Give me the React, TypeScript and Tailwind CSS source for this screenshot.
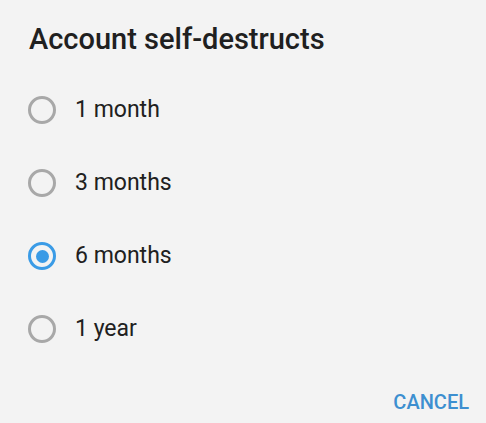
import React from "react";

const options = ["1 month", "3 months", "6 months", "1 year"];

function Radio({ checked }: { checked: boolean }) {
  return (
    <div
      className={
        "flex h-[28px] w-[28px] items-center justify-center rounded-full border-[3px] " +
        (checked ? "border-[#3a9be6]" : "border-[#a8a8a8]")
      }
    >
      {checked && <div className="h-[13px] w-[13px] rounded-full bg-[#3a9be6]" />}
    </div>
  );
}

export default function App() {
  const selected = "6 months";
  return (
    <div
      className="flex h-[423px] w-[486px] flex-col bg-[#f3f3f3] text-[#202020]"
      style={{ fontFamily: "Roboto, 'Noto Sans', sans-serif" }}
    >
      {/* Title */}
      <div className="pl-[29px] pt-[22px] text-[29px] font-medium leading-[34px]">
        Account self-destructs
      </div>

      {/* Options */}
      <div className="mt-[40px] flex flex-col gap-[45px] pl-[28px]">
        {options.map((o) => (
          <div key={o} className="flex h-[28px] items-center gap-[19px]">
            <Radio checked={o === selected} />
            <span className="text-[23px] leading-[28px]">{o}</span>
          </div>
        ))}
      </div>

      {/* Actions */}
      <div className="mt-auto flex justify-end pb-[8px] pr-[17px]">
        <span className="text-[20px] font-medium leading-[26px] text-[#3d8fd0]">CANCEL</span>
      </div>
    </div>
  );
}
